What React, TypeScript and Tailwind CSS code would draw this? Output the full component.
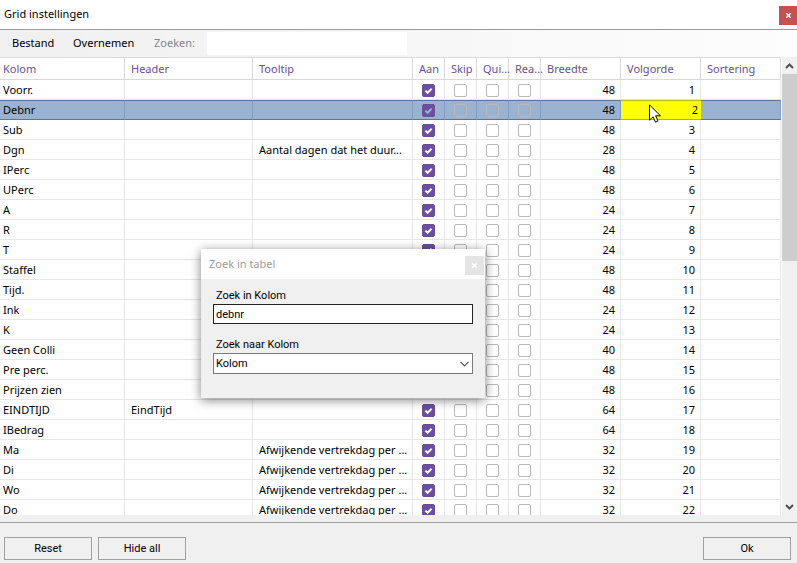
import { useState } from "react";

type Row = {
  name: string;
  header?: string;
  tooltip?: string;
  width: number;
};

const rows: Row[] = [
  { name: "Voorr.", width: 48 },
  { name: "Debnr", width: 48 },
  { name: "Sub", width: 48 },
  { name: "Dgn", tooltip: "Aantal dagen dat het duur...", width: 28 },
  { name: "IPerc", width: 48 },
  { name: "UPerc", width: 48 },
  { name: "A", width: 24 },
  { name: "R", width: 24 },
  { name: "T", width: 24 },
  { name: "Staffel", width: 48 },
  { name: "Tijd.", width: 48 },
  { name: "Ink", width: 24 },
  { name: "K", width: 24 },
  { name: "Geen Colli", width: 40 },
  { name: "Pre perc.", width: 48 },
  { name: "Prijzen zien", width: 48 },
  { name: "EINDTIJD", header: "EindTijd", width: 64 },
  { name: "IBedrag", width: 64 },
  { name: "Ma", tooltip: "Afwijkende vertrekdag per ...", width: 32 },
  { name: "Di", tooltip: "Afwijkende vertrekdag per ...", width: 32 },
  { name: "Wo", tooltip: "Afwijkende vertrekdag per ...", width: 32 },
  { name: "Do", tooltip: "Afwijkende vertrekdag per ...", width: 32 },
];

const headings = ["Kolom", "Header", "Tooltip", "Aan", "Skip", "Qui...", "Rea...", "Breedte", "Volgorde", "Sortering"];
const flags = ["Aan", "Skip", "Quick", "Readonly"];

function Tick({ label, initial, selected }: { label: string; initial: boolean; selected: boolean }) {
  const [checked, setChecked] = useState(initial);
  return (
    <span className="ml-[9px] grid h-[13px] w-[13px]">
      <input
        type="checkbox"
        aria-label={label}
        checked={checked}
        onChange={(e) => setChecked(e.target.checked)}
        className="col-start-1 row-start-1 h-[13px] w-[13px] appearance-none rounded-[2px] border border-[#b9b9b9] checked:border-[#6a4f9c] checked:bg-[#6a4f9c]"
      />
      {checked && (
        <svg
          viewBox="0 0 13 13"
          className={`pointer-events-none col-start-1 row-start-1 h-[13px] w-[13px] ${selected ? "text-[#9ab3d0]" : "text-white"}`}
          fill="none"
          stroke="currentColor"
          strokeWidth="2"
        >
          <path d="M3.4 6.6 5.6 8.8 9.6 4.8" />
        </svg>
      )}
    </span>
  );
}

function Pointer() {
  return (
    <svg viewBox="0 0 12 19" className="pointer-events-none absolute top-[3px] left-7 z-10 h-[19px] w-3" fill="white" stroke="black" strokeWidth="1">
      <path d="M.5 .8V16.2L4 12.8 6.5 18.2 9 17 6.6 11.8H11.4Z" />
    </svg>
  );
}

function GridRow({ row, order }: { row: Row; order: number }) {
  const selected = order === 2;
  const cell = selected
    ? "h-5 border-y border-r border-y-[#5a7896] border-r-[#809dbd] p-0"
    : "h-5 border-r border-b border-[#e7e7e7] p-0 pt-px";
  return (
    <tr className={selected ? "bg-[#99b3d1]" : "bg-white"}>
      <td className={cell}><div className="truncate pl-[3px]">{row.name}</div></td>
      <td className={cell}><div className="truncate pl-1.5">{row.header}</div></td>
      <td className={cell}><div className="overflow-hidden pl-1.5 whitespace-nowrap">{row.tooltip}</div></td>
      {flags.map((flag, i) => (
        <td key={flag} className={cell}>
          <Tick label={`${flag} ${row.name}`} initial={i === 0} selected={selected} />
        </td>
      ))}
      <td className={cell}><div className="pr-[5px] text-right">{row.width}</div></td>
      {selected ? (
        <td className="relative h-5 border-y border-y-[#b5b80a] bg-[#ffff00] p-0">
          <input
            aria-label="Volgorde Debnr"
            defaultValue={order}
            className="block h-4 w-full bg-transparent pr-[3px] text-right outline-none"
          />
          <Pointer />
        </td>
      ) : (
        <td className={cell}><div className="pr-[5px] text-right">{order}</div></td>
      )}
      <td className={cell} />
    </tr>
  );
}

function Scrollbar() {
  return (
    <div className="flex w-4 shrink-0 flex-col border-l border-white bg-[#f0f0f0]">
      <button aria-label="Omhoog" className="flex h-[17px] items-center justify-center">
        <svg viewBox="0 0 9 6" className="h-1.5 w-[9px]" fill="none" stroke="#505050" strokeWidth="2">
          <path d="M1 5 4.5 1.5 8 5" />
        </svg>
      </button>
      <div className="flex-1">
        <div className="h-[44%] bg-[#cdcdcd]" />
      </div>
      <button aria-label="Omlaag" className="flex h-[17px] items-center justify-center">
        <svg viewBox="0 0 9 6" className="h-1.5 w-[9px]" fill="none" stroke="#505050" strokeWidth="2">
          <path d="M1 1 4.5 4.5 8 1" />
        </svg>
      </button>
    </div>
  );
}

function SearchDialog() {
  return (
    <section
      role="dialog"
      aria-label="Zoek in tabel"
      className="absolute top-[249px] left-[201px] z-20 w-[284px] bg-[#f0f0f0] pb-6 font-['Roboto',sans-serif] text-[11px] shadow-[0_2px_10px_rgba(0,0,0,0.5)]"
    >
      <header className="flex h-[30px] justify-between bg-white pr-px pl-2">
        <h2 className="font-['Noto_Sans',sans-serif] leading-[30px] text-[#9a9a9a]">Zoek in tabel</h2>
        <button aria-label="Sluiten" className="mt-[7px] flex h-[19px] w-[19px] items-center justify-center bg-[#e4e4e4]">
          <Cross />
        </button>
      </header>
      <div className="px-3 pt-[9px] leading-4">
        <label htmlFor="term" className="block pl-[3px]">Zoek in Kolom</label>
        <input id="term" defaultValue="debnr" className="block h-5 w-full border border-[#222] bg-white px-[2px] outline-none" />
        <label htmlFor="column" className="mt-[13px] block pl-[3px]">Zoek naar Kolom</label>
        <div className="grid">
          <select id="column" className="col-start-1 row-start-1 h-[21px] w-full appearance-none border border-[#7a7a7a] bg-white px-[2px]">
            <option>Kolom</option>
            <option>Header</option>
            <option>Tooltip</option>
          </select>
          <svg
            viewBox="0 0 9 6"
            className="pointer-events-none col-start-1 row-start-1 mr-1 h-1.5 w-[9px] self-center justify-self-end"
            fill="none"
            stroke="#555"
            strokeWidth="1.2"
          >
            <path d="M.5 .8 4.5 4.8 8.5 .8" />
          </svg>
        </div>
      </div>
    </section>
  );
}

function Cross() {
  return (
    <svg viewBox="0 0 5 5" className="h-[5px] w-[5px]" stroke="white" strokeWidth="1.5">
      <path d="M.3 .3 4.7 4.7M4.7 .3 .3 4.7" />
    </svg>
  );
}

export default function App() {
  const button = "h-[23px] w-[88px] border border-[#a0a0a0] bg-[#f0f0f0] pt-0.5";
  return (
    <main className="relative flex h-screen flex-col overflow-hidden bg-[#f0f0f0] font-['Noto_Sans',sans-serif] text-[11px] text-black">
      <header className="flex h-[30px] shrink-0 justify-between border-b border-[#999] bg-white pl-1">
        <h1 className="leading-7">Grid instellingen</h1>
        <button aria-label="Sluiten" className="mt-1.5 flex h-[19px] w-[18px] items-center justify-center bg-[#c75050]">
          <Cross />
        </button>
      </header>
      <nav className="flex h-[27px] shrink-0 items-center bg-linear-to-r from-[#f0f0f0] to-[#fdfdfd] pl-3">
        <button className="w-[61px] text-left">Bestand</button>
        <button className="w-[81px] text-left">Overnemen</button>
        <label htmlFor="search" className="w-[53px] text-[#868686]">Zoeken:</label>
        <input id="search" className="h-[23px] w-[200px] bg-white px-1 outline-none" />
      </nav>
      <div className="flex min-h-0 flex-1">
        <div className="min-w-0 flex-1 overflow-hidden border-t border-[#d9d9d9]">
          <table className="w-full table-fixed border-separate border-spacing-0 leading-4">
            <colgroup>
              <col className="w-[125px]" />
              <col className="w-[128px]" />
              <col className="w-[160px]" />
              <col className="w-[32px]" />
              <col className="w-[32px]" />
              <col className="w-[32px]" />
              <col className="w-[32px]" />
              <col className="w-[80px]" />
              <col className="w-[80px]" />
              <col className="w-[80px]" />
            </colgroup>
            <thead>
              <tr className="bg-white text-[#6a4f9c]">
                {headings.map((h, i) => (
                  <th
                    key={h}
                    className={`h-[22px] border-r border-b border-[#d9d9d9] p-0 text-left font-normal whitespace-nowrap ${i === 0 ? "pl-[3px]" : "pl-1.5"}`}
                  >
                    {h}
                  </th>
                ))}
              </tr>
            </thead>
            <tbody>
              {rows.map((row, i) => (
                <GridRow key={row.name} row={row} order={i + 1} />
              ))}
            </tbody>
          </table>
        </div>
        <Scrollbar />
      </div>
      <footer className="mt-[7px] flex h-[41px] shrink-0 gap-1.5 border-t border-[#a0a0a0] pt-3.5 pr-1.5 pl-1 font-['Roboto',sans-serif]">
        <button className={button}>Reset</button>
        <button className={button}>Hide all</button>
        <button className={`ml-auto ${button}`}>Ok</button>
      </footer>
      <SearchDialog />
    </main>
  );
}
